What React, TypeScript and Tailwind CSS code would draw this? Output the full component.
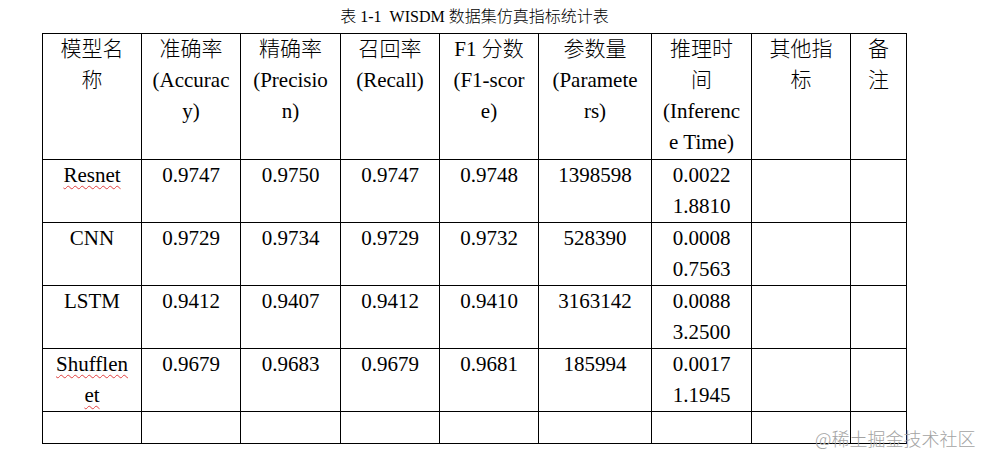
import React from "react";

const serif = { fontFamily: '"Liberation Serif", "Noto Sans CJK SC", serif' };

const headers: React.ReactNode[][] = [
  ["模型名", "称"],
  ["准确率", "(Accurac", "y)"],
  ["精确率", "(Precisio", "n)"],
  ["召回率", "(Recall)"],
  ["F1 分数", "(F1-scor", "e)"],
  ["参数量", "(Paramete", "rs)"],
  ["推理时", "间", "(Inferenc", "e Time)"],
  ["其他指", "标"],
  ["备", "注"],
];

const widths = [99, 99, 100, 99, 99, 113, 100, 99, 56];

const Wavy = ({ children }: { children: React.ReactNode }) => (
  <span className="underline decoration-wavy decoration-[#e04040] decoration-1 underline-offset-[3px]">
    {children}
  </span>
);

const rows: React.ReactNode[][][] = [
  [[<Wavy key="r">Resnet</Wavy>], ["0.9747"], ["0.9750"], ["0.9747"], ["0.9748"], ["1398598"], ["0.0022", "1.8810"], [], []],
  [["CNN"], ["0.9729"], ["0.9734"], ["0.9729"], ["0.9732"], ["528390"], ["0.0008", "0.7563"], [], []],
  [["LSTM"], ["0.9412"], ["0.9407"], ["0.9412"], ["0.9410"], ["3163142"], ["0.0088", "3.2500"], [], []],
  [[<Wavy key="s1">Shufflen</Wavy>, <Wavy key="s2">et</Wavy>], ["0.9679"], ["0.9683"], ["0.9679"], ["0.9681"], ["185994"], ["0.0017", "1.1945"], [], []],
];

export default function App() {
  return (
    <div className="relative w-[982px] h-[452px] bg-white text-black overflow-hidden font-light" style={serif}>
      <div className="h-[33px] leading-[33px] text-[16px] text-center w-[865px] ml-[42px]">
        表 1-1&nbsp; WISDM 数据集仿真指标统计表
      </div>
      <table className="ml-[42px] w-[865px] table-fixed border-collapse text-[21px] leading-[31px] text-center">
        <colgroup>
          {widths.map((w, i) => (
            <col key={i} style={{ width: w }} />
          ))}
        </colgroup>
        <tbody>
          <tr className="h-[126px]">
            {headers.map((lines, i) => (
              <td key={i} className="border border-black p-0 align-top whitespace-nowrap">
                {lines.map((l, j) => (
                  <div key={j}>{l}</div>
                ))}
              </td>
            ))}
          </tr>
          {rows.map((r, ri) => (
            <tr key={ri} className="h-[63px]">
              {r.map((lines, i) => (
                <td key={i} className="border border-black p-0 align-top whitespace-nowrap">
                  {lines.map((l, j) => (
                    <div key={j}>{l}</div>
                  ))}
                </td>
              ))}
            </tr>
          ))}
          <tr className="h-[32px]">
            {widths.map((_, i) => (
              <td key={i} className="border border-black p-0" />
            ))}
          </tr>
        </tbody>
      </table>
      <div
        className="absolute left-[815px] top-[425px] text-[18px] leading-[26px] text-[#a3a3a3] whitespace-nowrap"
        style={{ fontFamily: '"Noto Sans CJK SC", sans-serif' }}
      >
        @稀土掘金技术社区
      </div>
    </div>
  );
}
